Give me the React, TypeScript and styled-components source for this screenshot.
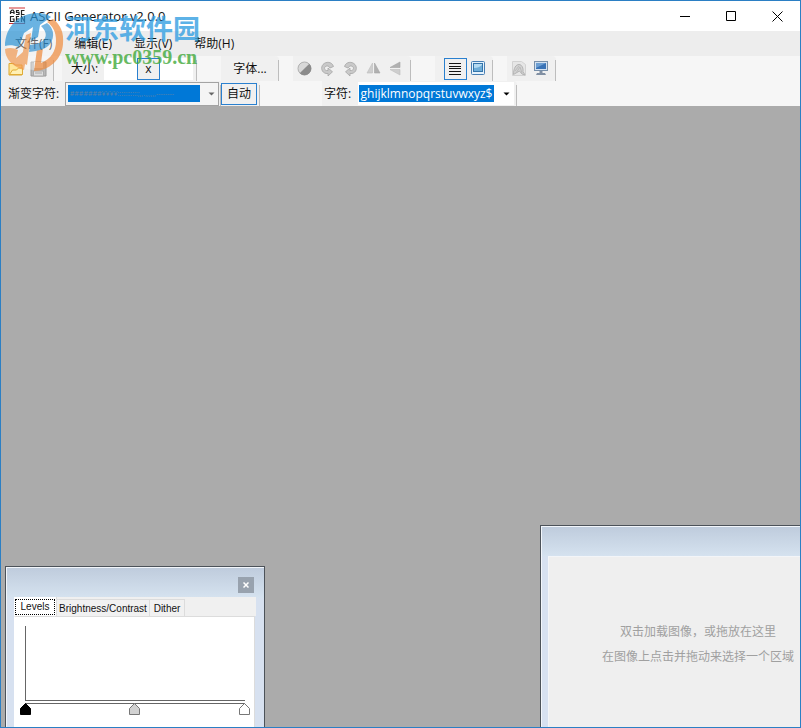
import React from "react";
import styled, { createGlobalStyle } from "styled-components";

const ui = `"Open Sans", "Noto Sans CJK SC", sans-serif`;
const legacy = `"Liberation Sans", "Noto Sans CJK SC", sans-serif`;

const GlobalStyle = createGlobalStyle`
  * { box-sizing: border-box; }
  body { margin: 0; font-family: ${ui}; font-size: 13px; color: #111; }
  button, input { font: inherit; color: inherit; margin: 0; padding: 0; border: 0; background: none; border-radius: 0; }
  svg { display: block; flex: none; }
`;

const Window = styled.div`
  position: relative;
  display: flex;
  flex-direction: column;
  height: 100vh;
  overflow: hidden;
  border: 1px solid #2b7fc4;
  background: #f6f6f6;
`;

const TitleBar = styled.header`
  display: flex;
  align-items: center;
  height: 30px;
  padding-left: 8px;
  background: #fff;
`;

const Title = styled.h1`
  flex: 1;
  margin: 0 0 0 4px;
  font-size: 13px;
  font-weight: 400;
  line-height: 16px;
  white-space: nowrap;
`;

const CaptionButton = styled.button`
  display: flex;
  align-items: center;
  justify-content: center;
  width: 46px;
  height: 30px;
`;

const MenuBar = styled.nav`
  display: flex;
  align-items: center;
  height: 25px;
  padding-left: 14px;
  gap: 22px;
  background: #ededed;
`;

const MenuItem = styled.button`
  font-size: 12px;
  line-height: 16px;
  white-space: nowrap;
`;

const ToolRow = styled.div`
  display: flex;
  height: 25px;
  font-size: 12px;
`;

const Group = styled.div<{ $gap?: number; $lead?: number }>`
  display: flex;
  align-items: center;
  flex: none;
  margin-right: ${(p) => p.$gap ?? 0}px;
  padding-left: ${(p) => p.$lead ?? 0}px;
  background: #f0f0f0;
  border-radius: 0 4px 4px 0;
`;

const Grip = styled.span<{ $space?: number }>`
  width: 1px;
  height: 21px;
  margin: 4px 0 0 ${(p) => p.$space ?? 0}px;
  background: #bdbdbd;
`;

const ToolButton = styled.button<{ $on?: boolean }>`
  display: flex;
  align-items: center;
  justify-content: center;
  width: 23px;
  height: 22px;
  border: 1px solid ${(p) => (p.$on ? "#2a80cf" : "transparent")};
`;

const TextButton = styled.button<{ $on?: boolean }>`
  height: 22px;
  width: ${(p) => (p.$on ? 36 : 48)}px;
  border: 1px solid ${(p) => (p.$on ? "#2a80cf" : "transparent")};
  line-height: 18px;
  white-space: nowrap;
`;

const Label = styled.label<{ $width: number }>`
  width: ${(p) => p.$width}px;
  line-height: 18px;
  white-space: nowrap;
`;

const SizeInput = styled.input`
  width: 33px;
  height: 22px;
  background: #fff;
`;

const Combo = styled.div<{ $framed?: boolean }>`
  display: flex;
  align-items: center;
  width: ${(p) => (p.$framed ? 154 : 156)}px;
  height: ${(p) => (p.$framed ? 24 : 23)}px;
  padding-left: ${(p) => (p.$framed ? 2 : 1)}px;
  border: ${(p) => (p.$framed ? "1px solid #a3a3a3" : "0")};
  background: ${(p) => (p.$framed ? "#f4f4f4" : "#fff")};
`;

const ComboInput = styled.input<{ $dim?: boolean }>`
  width: ${(p) => (p.$dim ? 132 : 135)}px;
  height: 17px;
  background: #0078d7;
  color: ${(p) => (p.$dim ? "#5f83a8" : "#fff")};
  font-size: ${(p) => (p.$dim ? 7 : 12)}px;
  text-align: ${(p) => (p.$dim ? "left" : "center")};
`;

const Arrow = styled.button`
  display: flex;
  flex: 1;
  height: 20px;
  align-items: center;
  justify-content: center;
  padding-left: 5px;
`;

const Workspace = styled.main`
  position: relative;
  flex: 1;
  overflow: hidden;
  background: #ababab;
`;

const ToolWindow = styled.section<{ $side: "left" | "right" }>`
  position: absolute;
  bottom: 0;
  display: flex;
  flex-direction: column;
  border: 1px solid #4c5259;
  border-bottom: 0;
  box-shadow: inset 1px 1px #f2f6fb;
  background: linear-gradient(#becbdc, #d5e2ef 30px, #d7e1f0 32px);
  ${(p) =>
    p.$side === "left"
      ? "left: 4px; width: 260px; height: 161px; padding: 0 8px;"
      : "right: 0; width: 260px; height: 202px; padding: 30px 0 0 7px; border-right: 0;"}
`;

const PanelHead = styled.div`
  display: flex;
  justify-content: flex-end;
  height: 30px;
  padding: 10px 2px 0 0;
`;

const CloseButton = styled.button`
  display: flex;
  align-items: center;
  justify-content: center;
  width: 16px;
  height: 16px;
  background: #98a2ae;
`;

const Tabs = styled.div`
  display: flex;
  align-items: flex-end;
  height: 19px;
  background: #f0f0f0;
  font-family: ${legacy};
  font-size: 10px;
`;

const Tab = styled.button<{ $active?: boolean; $width: number }>`
  width: ${(p) => p.$width}px;
  height: ${(p) => (p.$active ? 19 : 17)}px;
  padding: ${(p) => (p.$active ? "2px 1px 1px" : "1px 0 0")};
  border: 1px solid #dcdcdc;
  border-width: ${(p) => (p.$active ? "0 1px 0 0" : "1px 1px 0 0")};
  background: ${(p) => (p.$active ? "#fff" : "#f1f1f1")};
  white-space: nowrap;

  span {
    display: block;
    line-height: 14px;
    border: ${(p) => (p.$active ? "1px dotted #000" : "0")};
  }
`;

const LevelsPage = styled.div`
  flex: 1;
  padding: 9px 0 0 5px;
  border: 1px solid #dcdcdc;
  border-left-color: #fff;
  border-bottom: 0;
  background: #fff;
  margin-right: 1px;
`;

const DropArea = styled.div`
  display: flex;
  flex: 1;
  flex-direction: column;
  align-items: flex-end;
  padding: 62px 6px 0 0;
  background: #efefef;
  border: 1px solid #f3f5f8;
  border-width: 1px 0 0 1px;
  color: #a0a0a0;
  font-size: 12px;

  p { margin: 0; line-height: 25px; white-space: nowrap; }
  p:first-child { padding-right: 18px; }
`;

const Watermark = styled.div`
  position: absolute;
  left: 3px;
  top: 8px;
  display: flex;
  pointer-events: none;

  svg { opacity: 0.7; }
`;

const Brand = styled.div`
  display: flex;
  flex-direction: column;
  margin-left: 1px;
  white-space: nowrap;
  opacity: 0.8;

  strong {
    font: 700 27px/38px "Noto Sans CJK SC", sans-serif;
    color: #35a0e2;
  }
  span {
    font: 700 20px/20px "Liberation Serif", serif;
    color: #43aa3c;
  }
`;

const AppIcon = () => (
  <svg width="17" height="18" viewBox="0 0 17 18">
    <path d="M0 1h16M0 16.500h16" stroke="#d13232" />
    <path
      d="M1.500 7V4.500L3 3h1l1 1.500V7M1.500 5.500H5M10 3.500H7.500v1.800H10V7.500H7M15.500 3.500h-3v4h3M5 9.500H1.500v5H5V12H3.500M10 9.500H7.500v5H10M7.500 12H10M12.500 15V9.500l3 5V9"
      fill="none" stroke="#222" strokeWidth="1.200"
    />
  </svg>
);

const FolderIcon = () => (
  <svg width="16" height="16" viewBox="0 0 16 16">
    <path d="M1 2.500h5l1 1.500h7v10H1z" fill="#ffe69a" stroke="#dca62c" />
    <path d="M1.500 13.500L4.500 9h4l2-2h4v6.500z" fill="#fff0b5" stroke="#e0ac35" />
  </svg>
);

const SaveIcon = () => (
  <svg width="17" height="16" viewBox="0 0 17 16">
    <path d="M1 1h15v14H1z" fill="#b9b9b9" stroke="#999" />
    <path d="M4 1h9v6H4z" fill="#e8e8e8" />
    <path d="M3.500 10h10v5h-10z" fill="#ddd" stroke="#aaa" />
    <path d="M5 12h7" stroke="#aaa" />
  </svg>
);

const ContrastIcon = () => (
  <svg width="16" height="16" viewBox="0 0 16 16">
    <circle cx="7.500" cy="7.500" r="6.500" fill="#d8d8d8" stroke="#b0b0b0" />
    <path d="M12.300 2.700A6.700 6.700 0 0 1 2.700 12.300z" fill="#8b8b8b" />
  </svg>
);

const RotateIcon = ({ right }: { right?: boolean }) => (
  <svg width="16" height="16" viewBox="0 0 16 16">
    <g transform={right ? "translate(15 0) scale(-1 1)" : undefined}>
      <path
        d="M13.500 5.500C12 .5 6 .2 3 3.500.5 6.500 1.500 11.500 6 12.500h2V15l4.500-4.200L8 7v2.500H6.500C4 9 4 6 6 5.200c1.500-.7 3 0 4 1.800z"
        fill="#c9c9c9" stroke="#a6a6a6" strokeWidth=".8"
      />
    </g>
  </svg>
);

const FlipIcon = ({ vertical }: { vertical?: boolean }) => (
  <svg width="16" height="16" viewBox="0 0 16 16">
    <g transform={vertical ? "rotate(-90 8 8) translate(1 -1)" : undefined}>
      <path d="M6.500 2v10H1z" fill="#cecece" stroke="#bdbdbd" strokeWidth=".6" />
      <path d="M8.500 2v10H14z" fill="#b0b0b0" stroke="#a5a5a5" strokeWidth=".6" />
    </g>
  </svg>
);

const LinesIcon = () => (
  <svg width="16" height="16" viewBox="0 0 16 16">
    <path d="M1 2.500h12M1 5.500h12M1 7.500h12M1 10.500h12M1 13.500h12" stroke="#151515" />
  </svg>
);

const ImageIcon = () => (
  <svg width="16" height="16" viewBox="0 0 16 16">
    <rect x=".5" y=".5" width="13" height="13" rx="1" fill="#e5f2fc" stroke="#477eb3" />
    <rect x="2.500" y="2.500" width="9" height="8" fill="#6eadd8" stroke="#3474aa" />
    <path d="M3 7q5 0 8-3V3H3z" fill="#b5dbf2" />
  </svg>
);

const PageIcon = () => (
  <svg width="16" height="16" viewBox="0 0 16 16">
    <path d="M1.500 .5h9l4 3v11h-13z" fill="#e6e6e6" stroke="#d2d2d2" />
    <path d="M2.500 13.500C2.500 7 5 3.500 8 3.500s4.500 4 4 7l2 3.500-3-1-2.500-3z" fill="#d2d2d2" stroke="#b4b4b4" />
    <path d="M5 12l4-6M4 10l4-5M9 6l2 6" stroke="#bbb" fill="none" />
  </svg>
);

const MonitorIcon = () => (
  <svg width="16" height="16" viewBox="0 0 16 16">
    <rect x=".5" y=".5" width="13" height="9" fill="#d4e2f1" stroke="#7890aa" />
    <rect x="2" y="2" width="10" height="6" fill="#3973b7" />
    <path d="M2 2h10L2 7z" fill="#6d9fd3" />
    <path d="M5.500 10h3v2H11l1 2H2l1-2h2.500z" fill="#8190a3" />
  </svg>
);

const DownIcon = ({ dark }: { dark?: boolean }) => (
  <svg width="7" height="4" viewBox="0 0 7 4">
    <path d="M0.500 0.500h6L3.500 3.500z" fill={dark ? "#000" : "#666"} />
  </svg>
);

const LevelsGraph = () => (
  <svg width="232" height="92" viewBox="0 0 232 92">
    <path d="M5.500 0v75M5 74.500h220M5 77.500h220" fill="none" stroke="#666" />
    <path d="M.5 88.500v-6l5-5 5 5v6z" fill="#000" stroke="#000" />
    <path d="M109.500 88.500v-6l5-5 5 5v6z" fill="#d2d2d2" stroke="#777" />
    <path d="M219.500 88.500v-6l5-5 5 5v6z" fill="#fff" stroke="#777" />
  </svg>
);

const BrandLogo = () => (
  <svg width="60" height="64" viewBox="0 0 60 64">
    <circle cx="30" cy="34" r="27" fill="#fff" fillOpacity=".5" />
    <path d="M1 37C1 18 15 4 33 4c6 0 10 1 14 4L36 16l-2 12-7 4 2-14-9 6-5 14C9 36 5 36 1 37z" fill="#2c94d6" />
    <path d="M49 10c8 6 11 14 10 25-1 15-14 27-29 27l3-22 6-1-2 15c10-4 15-12 15-22 0-9-3-15-9-19z" fill="#f08b3c" />
    <path d="M1 40c5-2 9-1 13 1l-2 8 7-6 4 1-3 17C9 58 1 50 1 40z" fill="#f29a52" />
    <path d="M37 17l6-3c7 5 8 14 3 21-4 5-11 7-21 8l1-7c8-1 13-3 15-7 2-4 0-8-4-12z" fill="#3a97d4" />
    <path d="M22 26l5-2-4 32-6-3z" fill="#f29a52" />
  </svg>
);

export default function App() {
  return (
    <>
      <GlobalStyle />
      <Window>
        <TitleBar>
          <AppIcon />
          <Title>ASCII Generator v2.0.0</Title>
          <CaptionButton aria-label="Minimize">
            <svg width="11" height="11"><path d="M0 5.500h10" stroke="#000" /></svg>
          </CaptionButton>
          <CaptionButton aria-label="Maximize">
            <svg width="11" height="11"><path d="M.5.5h9v9H.5z" fill="none" stroke="#000" /></svg>
          </CaptionButton>
          <CaptionButton aria-label="Close">
            <svg width="11" height="11"><path d="M.5.5l10 10M10.500.5l-10 10" stroke="#000" /></svg>
          </CaptionButton>
        </TitleBar>
        <MenuBar>
          <MenuItem>文件(F)</MenuItem>
          <MenuItem>编辑(E)</MenuItem>
          <MenuItem>显示(V)</MenuItem>
          <MenuItem>帮助(H)</MenuItem>
        </MenuBar>
        <ToolRow>
          <Group $lead={3} $gap={8}>
            <ToolButton aria-label="Open"><FolderIcon /></ToolButton>
            <ToolButton aria-label="Save"><SaveIcon /></ToolButton>
            <Grip $space={3} />
          </Group>
          <Group $lead={9} $gap={24}>
            <Label $width={33} htmlFor="columns">大小:</Label>
            <SizeInput id="columns" />
            <ToolButton $on aria-label="Lock ratio">x</ToolButton>
            <SizeInput aria-label="Rows" />
            <Grip $space={3} />
          </Group>
          <Group $lead={5} $gap={14}>
            <TextButton>字体...</TextButton>
            <Grip $space={4} />
          </Group>
          <Group $gap={24}>
            <ToolButton aria-label="Invert"><ContrastIcon /></ToolButton>
            <ToolButton aria-label="Rotate left"><RotateIcon /></ToolButton>
            <ToolButton aria-label="Rotate right"><RotateIcon right /></ToolButton>
            <ToolButton aria-label="Flip horizontally"><FlipIcon /></ToolButton>
            <ToolButton aria-label="Flip vertically"><FlipIcon vertical /></ToolButton>
            <Grip $space={2} />
          </Group>
          <Group $lead={9} $gap={14}>
            <ToolButton $on aria-label="Text view"><LinesIcon /></ToolButton>
            <ToolButton aria-label="Image view"><ImageIcon /></ToolButton>
            <Grip $space={2} />
          </Group>
          <Group>
            <ToolButton aria-label="Sharpen"><PageIcon /></ToolButton>
            <ToolButton aria-label="Full screen"><MonitorIcon /></ToolButton>
            <Grip $space={2} />
          </Group>
        </ToolRow>
        <ToolRow>
          <Group $lead={7} $gap={62}>
            <Label $width={57} htmlFor="ramp">渐变字符:</Label>
            <Combo $framed>
              <ComboInput $dim id="ramp" defaultValue=" #######¥¥¥¥:::::::::::;,,.,,,,,,--------" />
              <Arrow aria-label="Show ramps"><DownIcon /></Arrow>
            </Combo>
            <Grip $space={1} />
            <TextButton $on>自动</TextButton>
            <Grip $space={2} />
          </Group>
          <Group $lead={2}>
            <Label $width={34} htmlFor="characters">字符:</Label>
            <Combo>
              <ComboInput id="characters" defaultValue="ghijklmnopqrstuvwxyz$" />
              <Arrow aria-label="Show character sets"><DownIcon dark /></Arrow>
            </Combo>
            <Grip $space={2} />
          </Group>
        </ToolRow>
        <Workspace>
          <ToolWindow $side="left">
            <PanelHead>
              <CloseButton aria-label="Close panel">
                <svg width="6" height="6"><path d="M.5.5l5 5M5.500.5l-5 5" stroke="#fff" strokeWidth="1.500" /></svg>
              </CloseButton>
            </PanelHead>
            <Tabs role="tablist">
              <Tab role="tab" aria-selected $active $width={43}><span>Levels</span></Tab>
              <Tab role="tab" $width={93}><span>Brightness/Contrast</span></Tab>
              <Tab role="tab" $width={35}><span>Dither</span></Tab>
            </Tabs>
            <LevelsPage><LevelsGraph /></LevelsPage>
          </ToolWindow>
          <ToolWindow $side="right">
            <DropArea>
              <p>双击加载图像，或拖放在这里</p>
              <p>在图像上点击并拖动来选择一个区域</p>
            </DropArea>
          </ToolWindow>
        </Workspace>
        <Watermark>
          <BrandLogo />
          <Brand>
            <strong>河东软件园</strong>
            <span>www.pc0359.cn</span>
          </Brand>
        </Watermark>
      </Window>
    </>
  );
}
